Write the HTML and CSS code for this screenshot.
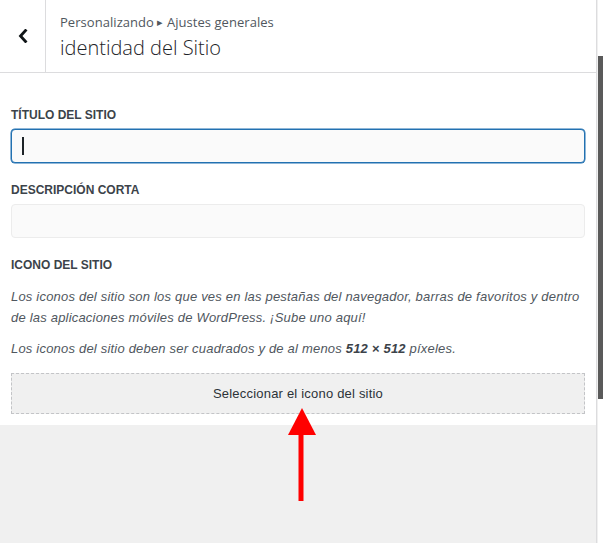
FILE: index.html
```html
<!DOCTYPE html>
<html lang="es">
<head>
  <meta charset="UTF-8">
  <title>Identidad del Sitio</title>
  <link rel="stylesheet" href="styles.css">
</head>
<body>
  <div class="customizer">
    <div class="panel">
      <!-- Section header with back button -->
      <div class="panel-head">
        <button class="back-btn" aria-label="Volver">
          <svg width="10" height="14" viewBox="0 0 10 14">
            <path d="M7.5 1.5 L2.5 7 L7.5 12.5" fill="none" stroke="#101517" stroke-width="2.8" stroke-linecap="square"/>
          </svg>
        </button>
        <div class="head-titles">
          <span class="crumb">Personalizando <span class="crumb-sep">&#9656;</span> Ajustes generales</span>
          <h2>identidad del Sitio</h2>
        </div>
      </div>

      <!-- Controls -->
      <div class="controls">
        <span class="control-label">Título del sitio</span>
        <div class="text-field focused"><span class="caret"></span></div>

        <span class="control-label">Descripción corta</span>
        <div class="text-field"></div>

        <span class="control-label">Icono del sitio</span>
        <p class="description">Los iconos del sitio son los que ves en las pestañas del navegador, barras de favoritos y dentro de las aplicaciones móviles de WordPress. ¡Sube uno aquí!</p>
        <p class="description second">Los iconos del sitio deben ser cuadrados y de al menos <strong>512 × 512</strong> píxeles.</p>
        <button class="upload-btn">Seleccionar el icono del sitio</button>
      </div>
    </div>

    <div class="scrollbar"><div class="scroll-thumb"></div></div>
  </div>

  <!-- Red pointer arrow over the page -->
  <svg class="pointer" width="30" height="95" viewBox="0 0 30 95">
    <polygon points="15,0 29,27 1,27" fill="#ff0000"/>
    <rect x="11.5" y="26" width="5" height="67" fill="#ff0000"/>
  </svg>
</body>
</html>
```

FILE: styles.css
```css
/* Page */
body {
  margin: 0;
  background: #f0f0f0;
  font-family: "Liberation Sans", Arial, sans-serif;
  color: #3c434a;
}

.customizer {
  display: flex;
  min-height: 543px;
}

/* Panel column */
.panel {
  width: 597px;
  border-right: 1px solid #dcdcde;
  background: #f0f0f0;
}

.panel-head {
  display: flex;
  height: 72px;
  background: #fff;
  border-bottom: 1px solid #dcdcde;
}

.back-btn {
  width: 46px;
  padding: 0;
  border: none;
  border-right: 1px solid #dcdcde;
  background: #fff;
  display: flex;
  align-items: center;
  justify-content: center;
  padding-bottom: 1px;
}

.head-titles {
  display: flex;
  flex-direction: column;
  padding: 13px 0 0 14px;
  font-family: "Open Sans", "Noto Sans", sans-serif;
}

.crumb {
  font-size: 13px;
  line-height: 18px;
  color: #50575e;
  letter-spacing: 0.05px;
}

.crumb-sep {
  font-size: 11px;
  position: relative;
  top: -1px;
}

.head-titles h2 {
  margin: 3px 0 0;
  font-size: 20px;
  font-weight: 300;
  line-height: 26px;
  color: #1d2327;
}

/* Controls area */
.controls {
  background: #fff;
  padding: 34px 11px 11px;
  display: flex;
  flex-direction: column;
}

.control-label {
  display: block;
  font-size: 12px;
  font-weight: bold;
  line-height: 16px;
  text-transform: uppercase;
  color: #3c434a;
  margin-bottom: 6px;
}

.text-field {
  height: 32px;
  border: 1px solid #ececec;
  border-radius: 4px;
  background: #fafafa;
  margin-bottom: 19px;
  display: flex;
  align-items: center;
  padding-left: 10px;
}

.text-field.focused {
  border-color: #2271b1;
  box-shadow: 0 0 0 0.5px #2271b1;
}

.caret {
  width: 1.5px;
  height: 18px;
  background: #1d2327;
}

.description {
  margin: 7px 0 0;
  font-size: 13px;
  line-height: 21px;
  letter-spacing: 0.2px;
  font-style: italic;
  color: #50575e;
}

.description.second {
  margin-top: 10px;
}

.description strong {
  color: #3c434a;
}

.upload-btn {
  margin-top: 14px;
  height: 41px;
  border: 1px dashed #c3c4c7;
  background: #f0f0f0;
  font-family: "Liberation Sans", Arial, sans-serif;
  font-size: 13px;
  letter-spacing: 0.2px;
  color: #2c3338;
  cursor: pointer;
}

/* Scrollbar column */
.scrollbar {
  width: 5px;
  margin-left: 1px;
  background: #fff;
  padding-top: 56px;
}

.scroll-thumb {
  width: 5px;
  height: 343px;
  background: #5a5a5a;
}

/* Red arrow annotation */
.pointer {
  position: absolute;
  left: 287px;
  top: 408px;
}
```
